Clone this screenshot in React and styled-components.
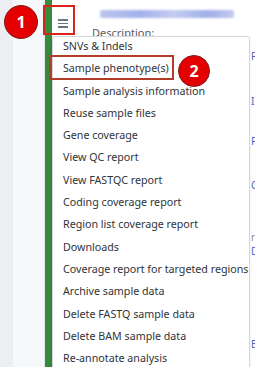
import React from 'react';
import styled, { createGlobalStyle } from 'styled-components';

const GlobalStyle = createGlobalStyle`
  html, body {
    margin: 0;
    padding: 0;
    background: #f4f5f7;
  }
  body {
    font-family: "Noto Sans", "Open Sans", sans-serif;
  }
`;

const Frame = styled.div`
  position: relative;
  display: flex;
  width: 255px;
  height: 367px;
  overflow: hidden;
`;

const Sidebar = styled.div`
  width: 45px;
  flex-shrink: 0;
  background: linear-gradient(to right, #eceef2 0 13px, #f7f8fa 13px);
  border-right: 1px solid #e2e4e8;
  box-sizing: border-box;
`;

const Stripe = styled.div`
  width: 7px;
  flex-shrink: 0;
  background: #368c3d;
`;

const Main = styled.div`
  flex: 1;
  display: flex;
  flex-direction: column;
  background: #fff;
`;

const Header = styled.div`
  display: flex;
  align-items: flex-start;
  padding-top: 10px;
`;

const MenuToggle = styled.button`
  width: 22px;
  height: 25px;
  margin-top: 1px;
  padding: 0;
  border: none;
  background: transparent;
  display: flex;
  flex-direction: column;
  align-items: center;
  justify-content: center;
  gap: 2px;
`;

const Bar = styled.span`
  display: block;
  width: 10px;
  height: 1.5px;
  background: #6c757d;
`;

const TitleColumn = styled.div`
  display: flex;
  flex-direction: column;
  margin-left: 18px;
`;

const TitleBlur = styled.div`
  width: 134px;
  height: 8px;
  margin-left: 8px;
  border-radius: 2px;
  background: linear-gradient(to right, #bcc5ef, #a3b2eb 30%, #c4ccf1 55%, #a1afe9 80%, #c1caf0);
  filter: blur(1px);
`;

const Description = styled.div`
  margin-top: 8px;
  font-size: 11px;
  line-height: 13px;
  color: #555b63;
`;

const PeekList = styled.div`
  display: flex;
  flex-direction: column;
`;

const Peek = styled.div`
  margin-top: ${(p) => p.$gap}px;
  padding-left: 199px;
  font-size: 10px;
  line-height: 10px;
  color: ${(p) => (p.$muted ? '#8a8f96' : '#4a63c8')};
  white-space: nowrap;
`;

const Dropdown = styled.ul`
  position: absolute;
  top: 36px;
  left: 52px;
  width: 198px;
  margin: 0;
  padding: 0;
  list-style: none;
  background: #fff;
  border: 1px solid #d4d6da;
  border-radius: 3px;
  box-shadow: -1px 2px 4px rgba(0, 0, 0, 0.12);
  box-sizing: border-box;
`;

const Item = styled.li`
  height: 22.3px;
  padding: 1px 10px 0;
  box-sizing: border-box;
  font-size: 10.7px;
  line-height: 16px;
  color: #2f3439;
  white-space: nowrap;
`;

const Highlight = styled.div`
  position: absolute;
  top: ${(p) => p.$top}px;
  left: ${(p) => p.$left}px;
  width: ${(p) => p.$w}px;
  height: ${(p) => p.$h}px;
  border: 2px solid ${(p) => p.$color};
  box-sizing: border-box;
`;

const Badge = styled.div`
  position: absolute;
  top: ${(p) => p.$top}px;
  left: ${(p) => p.$left}px;
  width: ${(p) => p.$size}px;
  height: ${(p) => p.$size}px;
  border-radius: 50%;
  background: #e40000;
  border: 1.5px solid #7d1d1d;
  box-sizing: border-box;
  display: grid;
  place-items: center;
  color: #fff;
  font-weight: 700;
  font-size: 16px;
  line-height: 1;
`;

const menuItems = [
  'SNVs & Indels',
  'Sample phenotype(s)',
  'Sample analysis information',
  'Reuse sample files',
  'Gene coverage',
  'View QC report',
  'View FASTQC report',
  'Coding coverage report',
  'Region list coverage report',
  'Downloads',
  'Coverage report for targeted regions',
  'Archive sample data',
  'Delete FASTQ sample data',
  'Delete BAM sample data',
  'Re-annotate analysis',
];

const peeks = [
  { gap: 12, text: 'P' },
  { gap: 35, text: 'I' },
  { gap: 30, text: 'P' },
  { gap: 34, text: 'C' },
  { gap: 42, text: 'r', muted: true },
  { gap: 4, text: 'D' },
  { gap: 83, text: 'E' },
];

const App = () => {
  return (
    <Frame>
      <GlobalStyle />
      <Sidebar />
      <Stripe />
      <Main>
        <Header>
          <MenuToggle aria-label="menu">
            <Bar />
            <Bar />
            <Bar />
          </MenuToggle>
          <TitleColumn>
            <TitleBlur />
            <Description>Description:</Description>
          </TitleColumn>
        </Header>
        <PeekList>
          {peeks.map((p, i) => (
            <Peek key={i} $gap={p.gap} $muted={p.muted}>
              {p.text}
            </Peek>
          ))}
        </PeekList>
      </Main>

      <Dropdown>
        {menuItems.map((label) => (
          <Item key={label}>{label}</Item>
        ))}
      </Dropdown>

      <Highlight $top={5} $left={43} $w={32} $h={30} $color="#d8241b" />
      <Highlight $top={55} $left={49} $w={125} $h={25} $color="#b13d28" />
      <Badge $top={5} $left={4} $size={34}>1</Badge>
      <Badge $top={55} $left={178} $size={32}>2</Badge>
    </Frame>
  );
};

export default App;
